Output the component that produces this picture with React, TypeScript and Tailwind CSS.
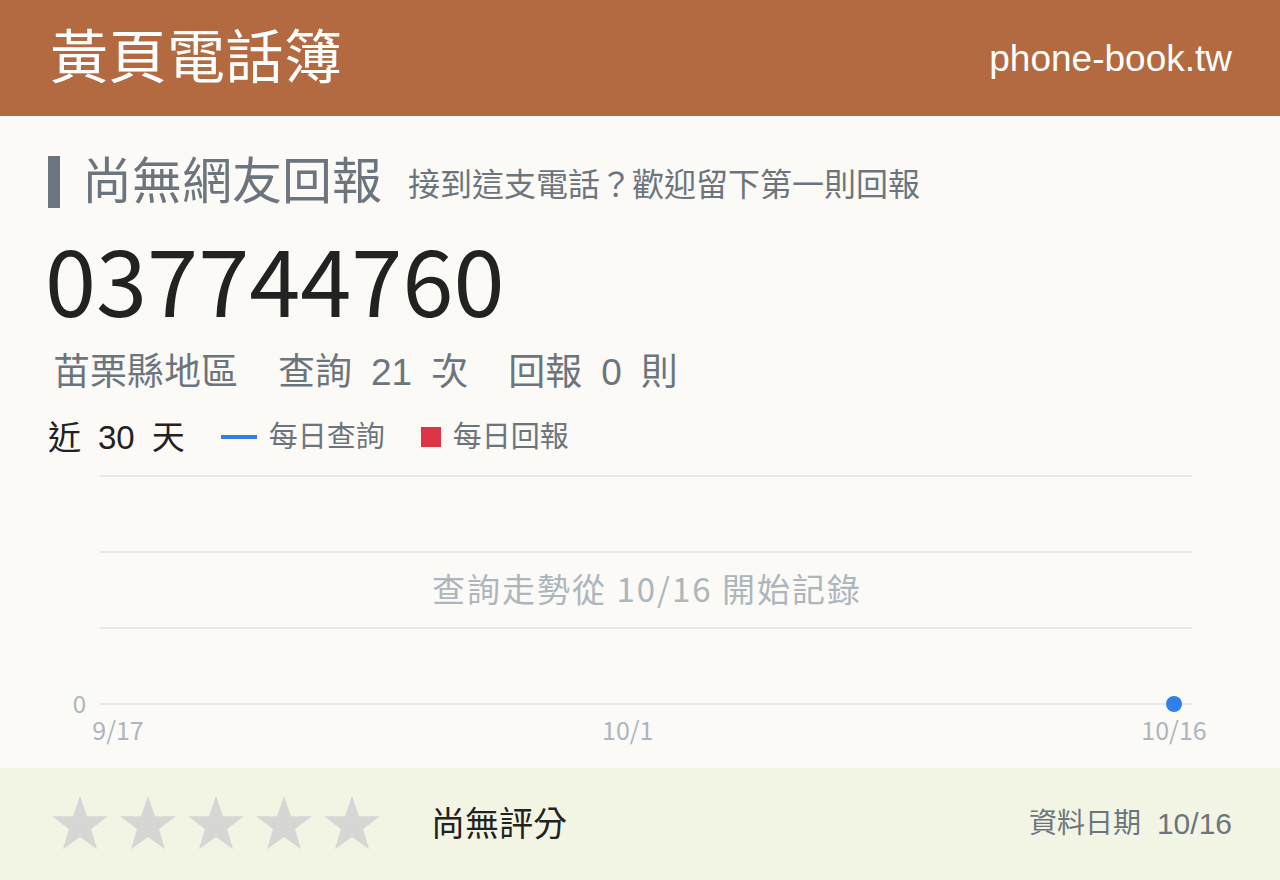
import React from 'react';

const SANS = "font-['Liberation_Sans','Noto_Sans_CJK_TC',sans-serif]";
const CJK = "'Noto Sans CJK TC', sans-serif";

const GRID_Y = [19, 95, 171, 247];
const X_START = 118;
const X_END = 1174;
const DAYS = 30;

function dayX(i: number) {
  return X_START + ((X_END - X_START) * i) / (DAYS - 1);
}

function Star() {
  return (
    <svg viewBox="0 0 24 24" className="w-[62px] h-[62px]" fill="#d6d7d5">
      <polygon points="12,1.2 14.7,9 22.8,9 16.3,13.9 18.6,21.8 12,17 5.4,21.8 7.7,13.9 1.2,9 9.3,9" />
    </svg>
  );
}

function TrendChart() {
  const ticks = [
    { label: '9/17', day: 0 },
    { label: '10/1', day: 14 },
    { label: '10/16', day: 29 },
  ];
  return (
    <svg viewBox="0 0 1280 311" className="w-[1280px] h-[311px] block">
      {GRID_Y.map((y) => (
        <line key={y} x1={100} x2={1192} y1={y} y2={y} stroke="#e6e8ec" strokeWidth={2} />
      ))}
      <text x={86} y={256} textAnchor="end" fontSize={24} fill="#adb5bd" fontFamily={CJK}>
        0
      </text>
      {ticks.map((t) => (
        <text key={t.label} x={dayX(t.day)} y={283} textAnchor="middle" fontSize={25} fill="#adb5bd" fontFamily={CJK}>
          {t.label}
        </text>
      ))}
      <text x={647} y={145} textAnchor="middle" fontSize={33} fill="#adb5bd" fontFamily={CJK} letterSpacing={2}>
        查詢走勢從 10/16 開始記錄
      </text>
      <circle cx={dayX(29)} cy={247} r={8} fill="#2f80ed" />
    </svg>
  );
}

export default function App() {
  return (
    <div className={`w-[1280px] h-[880px] flex flex-col bg-[#fbfaf6] ${SANS}`}>
      {/* Site header */}
      <header className="h-[116px] shrink-0 bg-[#b46a40] flex items-center justify-between pl-[50px] pr-[48px]">
        <h1 className="text-white text-[58px] leading-none tracking-[0.5px]">黃頁電話簿</h1>
        <span className="text-white text-[37px] leading-none">phone-book.tw</span>
      </header>

      <main className="flex-1 flex flex-col">
        {/* Report heading */}
        <div className="mt-[40px] mx-[48px] flex items-center h-[52px] border-l-[12px] border-[#6c757d] pl-[22px]">
          <h2 className="text-[50px] leading-[52px] text-[#6c757d]">尚無網友回報</h2>
          <span className="ml-[26px] text-[32px] text-[#6c757d] leading-none pt-[6px]">
            接到這支電話？歡迎留下第一則回報
          </span>
        </div>

        {/* Phone number */}
        <div className="mt-[19px] mx-[45px] h-[100px] flex items-center text-[92px] leading-none text-[#222222] font-['Noto_Sans_CJK_TC',sans-serif]">
          037744760
        </div>

        {/* Region and counts */}
        <div className="mt-[25px] ml-[53px] h-[40px] flex items-center gap-[40px] text-[37px] text-[#6c757d] leading-none">
          <span>苗栗縣地區</span>
          <span className="flex items-center gap-[19px]">
            <span>查詢</span>
            <span>21</span>
            <span>次</span>
          </span>
          <span className="flex items-center gap-[19px]">
            <span>回報</span>
            <span>0</span>
            <span>則</span>
          </span>
        </div>

        {/* Legend */}
        <div className="mt-[25px] mx-[48px] h-[40px] flex items-center leading-none">
          <span className="flex items-center gap-[17px] text-[33px] text-[#222222]">
            <span>近</span>
            <span>30</span>
            <span>天</span>
          </span>
          <span className="ml-[36px] flex items-center gap-[12px] text-[29px] text-[#6c757d]">
            <span className="w-[36px] h-[4px] bg-[#2f80ed]" />
            每日查詢
          </span>
          <span className="ml-[36px] flex items-center gap-[12px] text-[29px] text-[#6c757d]">
            <span className="w-[20px] h-[20px] bg-[#dc3545]" />
            每日回報
          </span>
        </div>

        <div className="flex-1">
          <TrendChart />
        </div>
      </main>

      {/* Rating footer */}
      <footer className="h-[112px] shrink-0 bg-[#f2f5e3] flex items-center justify-between pl-[49px] pr-[48px]">
        <div className="flex items-center">
          <div className="flex items-center gap-[6px]">
            <Star />
            <Star />
            <Star />
            <Star />
            <Star />
          </div>
          <span className="ml-[48px] text-[34px] text-[#222222] leading-none">尚無評分</span>
        </div>
        <div className="flex items-center gap-[16px] text-[#6c757d] leading-none">
          <span className="text-[28px]">資料日期</span>
          <span className="text-[30px]">10/16</span>
        </div>
      </footer>
    </div>
  );
}
